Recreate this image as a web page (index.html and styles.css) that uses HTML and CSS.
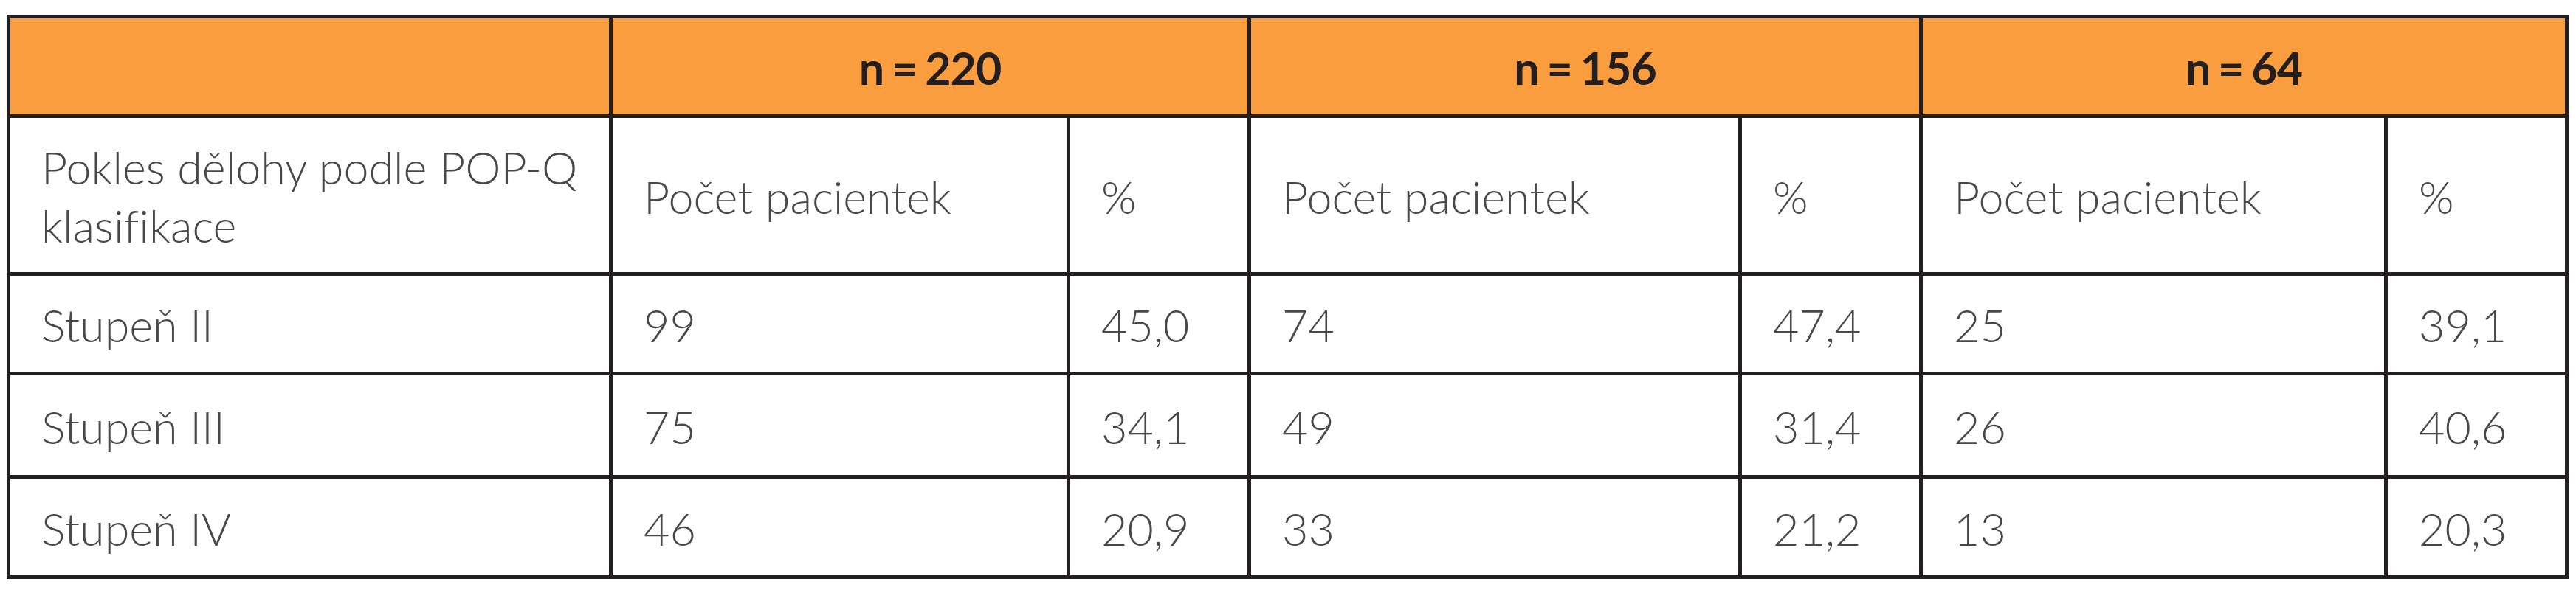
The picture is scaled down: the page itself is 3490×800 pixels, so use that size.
FILE: index.html
```html
<!DOCTYPE html>
<html lang="cs">
<head>
<meta charset="utf-8">
<title>Pokles dělohy podle POP-Q klasifikace</title>
<link rel="stylesheet" href="styles.css">
</head>
<body>
<div class="table" role="table">
  <div class="cell head" role="columnheader"></div>
  <div class="cell head span2" role="columnheader">n = 220</div>
  <div class="cell head span2" role="columnheader">n = 156</div>
  <div class="cell head span2" role="columnheader">n = 64</div>

  <div class="cell label" role="rowheader">Pokles dělohy podle POP-Q klasifikace</div>
  <div class="cell">Počet pacientek</div>
  <div class="cell">%</div>
  <div class="cell">Počet pacientek</div>
  <div class="cell">%</div>
  <div class="cell">Počet pacientek</div>
  <div class="cell">%</div>

  <div class="cell" role="rowheader">Stupeň II</div>
  <div class="cell">99</div>
  <div class="cell">45,0</div>
  <div class="cell">74</div>
  <div class="cell">47,4</div>
  <div class="cell">25</div>
  <div class="cell">39,1</div>

  <div class="cell" role="rowheader">Stupeň III</div>
  <div class="cell">75</div>
  <div class="cell">34,1</div>
  <div class="cell">49</div>
  <div class="cell">31,4</div>
  <div class="cell">26</div>
  <div class="cell">40,6</div>

  <div class="cell" role="rowheader">Stupeň IV</div>
  <div class="cell">46</div>
  <div class="cell">20,9</div>
  <div class="cell">33</div>
  <div class="cell">21,2</div>
  <div class="cell">13</div>
  <div class="cell">20,3</div>
</div>
</body>
</html>
```
FILE: styles.css
```css
html, body {
  background: #ffffff;
}
body {
  margin: 0;
  padding: 20px 0 0 9px;
  font-family: "Lato", "Open Sans", sans-serif;
}
.table {
  display: grid;
  width: max-content;
  grid-template-columns: 811px 615px 240px 660px 240px 625px 240px;
  grid-template-rows: 130px 209px 130px 135px 131px;
  gap: 5px;
  padding: 5px;
  background: #231f20;
}
.cell {
  display: flex;
  align-items: center;
  background: #ffffff;
  padding: 3px 0 0 42px;
  font-size: 61px;
  font-weight: 300;
  color: #48484a;
  line-height: 79px;
  font-variant-ligatures: none;
  box-sizing: border-box;
}
.head {
  background: #f99d3e;
  justify-content: center;
  padding: 3px 0 0 0;
  font-weight: 700;
  color: #231f20;
  word-spacing: -3px;
  letter-spacing: -1px;
}
.span2 {
  grid-column: span 2;
}
```
